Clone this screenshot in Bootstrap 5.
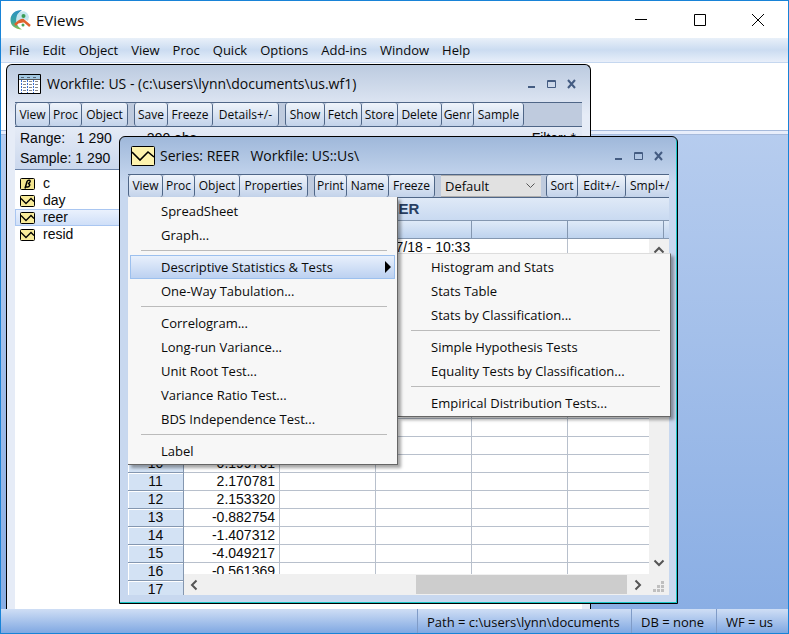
<!DOCTYPE html>
<html lang="en">
<head>
<meta charset="utf-8">
<meta name="viewport" content="width=device-width, initial-scale=1">
<title>EViews</title>
<link href="https://cdn.jsdelivr.net/npm/bootstrap@5.3.0/dist/css/bootstrap.min.css" rel="stylesheet">
<style>
:root{--line:#4f6687;--cell:#b8c0cc}
body{font-family:"Open Sans","Noto Sans",sans-serif;font-size:13px;line-height:18px;color:#0a0a0a}
button,select{font:inherit;color:inherit}
button{background:none;border:0;padding:0}
a{color:inherit;text-decoration:none}
.app{border:1px solid #1883d7;overflow:hidden}
.app-title{height:37px;padding-left:9px;font-size:15px}
.app-title .caption{gap:5px}
.win-controls{width:154px;padding-right:23px}
.win-controls button,.win-controls svg,.frame-controls svg{display:block}
.menubar{height:25px;gap:13px;padding-left:8px;background:linear-gradient(#e9f0f9,#cbdcf1 50%,#e8effa);border-bottom:1px solid #c5d7ef}
.desktop{background:linear-gradient(#bdd1f0,#8aaee4)}
.command{height:72px;background:#fff;border-bottom:1px solid #a6badb}
.command::after{content:"";display:block;height:4px;margin-top:67px;background:#e8eefb;border-top:1px solid #a6badb}
.frame{border:1px solid #000;border-radius:6px 6px 0 0;overflow:hidden;padding:0 8px}
.frame-work{left:5px;top:1px;bottom:0;width:585px;border-bottom:0;background:linear-gradient(#bccbe0,#e6ecf7 50px)}
.frame-series{left:118px;top:73px;width:559px;background:linear-gradient(#9fb8da,#c8d8ef 46px);box-shadow:inset -1px -1px #19c5c5;padding-bottom:8px}
.frame-bar{height:37px;font-size:14px}
.frame-bar .caption{gap:5px;padding-left:3px}
.frame-work .caption{gap:6px}
.frame-controls{gap:11px;padding-right:3px}
.tools{display:grid;height:25px;border:solid var(--line);border-width:1px 0;background:#bfcbde}
.tools-work{grid-template-columns:35px 32px 46px 6px 34px 45px 66px 6px 40px 37px 36px 44px 32px 50px}
.tools-series{height:24px;grid-template-columns:35px 32px 45px 68px 6px 33px 42px 46px 6px 100px 5px 32px 48px 49px;overflow:hidden}
.tools button{font-size:12px;white-space:nowrap;border:solid var(--line);border-width:0 1px 0 0;border-radius:3px;background:linear-gradient(#eff4fb,#c3d3ea)}
.tools button.lead-in{border-left-width:1px}
.tools select{border:1px solid #adadad;border-width:1px 0;padding:0 4px;appearance:none;background:#e1e1e1 url("data:image/svg+xml,%3Csvg xmlns='http://www.w3.org/2000/svg' width='9' height='6'%3E%3Cpath d='M.5 .5l4 4 4-4' fill='none' stroke='%23555'/%3E%3C/svg%3E") no-repeat right 6px center;border-radius:0}
.arial{font-family:"Liberation Sans",Arial,sans-serif;font-size:14px}
.info{height:43px;padding:1px 6px 0 5px;line-height:20px;border-bottom:1px solid #6b83a8;background:linear-gradient(#e5ebf6,#cbd8ee)}
.objects{padding-top:5px}
.objects a{height:17px;line-height:17px;gap:8px;padding-left:4px;border:1px solid transparent}
.objects a.on{background:linear-gradient(#eaf1fd,#cfdff8);border-color:#a9c6f1}
.sheet{height:397px}
.sheet-title{height:22px;font-size:15px;line-height:22px;color:#283f62;background:linear-gradient(#dfe9f7,#c9daf1)}
.grid{table-layout:fixed;width:556px;border-collapse:separate;border-spacing:0;line-height:17px}
.grid th,.grid td{height:18px;padding:0 4px 0 0;border:solid var(--cell);border-width:0 1px 1px 0;background:#fff;text-align:right;white-space:nowrap}
.grid thead th{border-color:#8497b0;border-top:1px solid #8497b0;background:linear-gradient(#dfeaf8,#bed3ee);height:19px}
.grid tbody th{font-weight:400;text-align:center;padding:0;background:#d3e2f4;border-color:#8497b0;box-shadow:inset 1px 1px #fff}
.w-row{width:56px}.w-col{width:96px}.w-end{width:20px}
.vbar{right:0;top:41px;bottom:0;width:20px;background:#f0f0f0;padding:7px 0 2px}
.hbar{left:56px;right:20px;bottom:0;height:21px;background:#f0f0f0;padding:1px 7px 1px 6px}
.thumb{width:211px;background:#cdcdcd;margin-right:7px}
.popup{background:#f7f7f7;border:solid #666;border-width:0 1px 1px 0;padding:2px 2px 1px;box-shadow:3px 3px 3px rgba(0,0,0,.35);z-index:3}
.popup-view{left:8px;top:60px;width:270px}
.popup-tests{left:278px;top:116px;width:273px;border-top:1px solid #ddd;padding-top:1px;z-index:2}
.popup button{display:flex;align-items:center;justify-content:space-between;width:100%;height:24px;padding:0 3px 0 31px}
.popup button.on{background:linear-gradient(#e8f0fc,#bcd1f1);background-clip:padding-box;border:1px solid #9cc0ee;padding:0 2px 0 30px}
.popup hr{margin:3px 8px 4px 11px;border-top:1px solid #bbb;opacity:1}
.status{height:24px;background:linear-gradient(#cfdef5,#80a8e2)}
.status span{border-left:1px solid #7f9bc7;padding:4px 9px 0;height:24px}
.s-path{width:214px}.s-db{width:85px}.s-wf{width:72px}
</style>
</head>
<body>
<svg class="d-none">
  <symbol id="series" viewBox="0 0 24 20"><rect x=".5" y=".5" width="23" height="19" rx="1" fill="#fdf3ae" stroke="#000"/><path d="M1 6l8 8 8-8 6 5" fill="none" stroke="#000" stroke-width="1.6"/></symbol>
  <symbol id="series-sm" viewBox="0 0 15 12"><rect x=".5" y=".5" width="14" height="11" rx="1" fill="#f8eb9a" stroke="#000"/><path d="M1 3.500l5 5 5-5 3 3" fill="none" stroke="#000" stroke-width="1.300"/></symbol>
  <symbol id="ctl" viewBox="0 0 52 12"><path d="M1 9h7" stroke="#445c82" stroke-width="2"/><path d="M20.500 2.500h8v7h-8zM20 3.500h9" fill="none" stroke="#445c82"/><path d="M41 2l7 8M48 2l-7 8" stroke="#445c82" stroke-width="2"/></symbol>
</svg>
<div class="app d-flex flex-column vh-100">
  <header class="app-title d-flex align-items-center justify-content-between bg-white">
    <div class="caption d-flex align-items-center">
      <svg width="21" height="20" viewBox="0 0 21 20"><defs><linearGradient id="g" x2="0" y2="1"><stop stop-color="#2b8fc4"/><stop offset=".6" stop-color="#3aa6a0"/><stop offset="1" stop-color="#8cc04a"/></linearGradient></defs><path d="M12 0C5 0 .500 4 .500 10S5 19 12 19.500C8 17 6 14 6.500 10S8 3 12 0z" fill="url(#g)"/><path d="M10 2c5-2 8 1 9 5l-1 4-4-2-4 2-3 2C6 9 6 4 10 2z" fill="#c3e5ee"/><circle cx="13.500" cy="6" r="2" fill="#3b9d57"/><path d="M5 15c3-3 5-5 8-5l7 6M9 12l5-1" stroke="#e0622c" stroke-width="2.500" fill="none"/><circle cx="13" cy="15" r="1.500" fill="#4ba35a"/></svg>
      <span>EViews</span>
    </div>
    <div class="win-controls d-flex align-items-center justify-content-between">
      <button aria-label="Minimize"><svg width="14" height="14"><path d="M1 6.500h12" stroke="#000"/></svg></button>
      <button aria-label="Maximize"><svg width="14" height="14"><path d="M1.500 1.500h11v11h-11z" fill="none" stroke="#000"/></svg></button>
      <button aria-label="Close"><svg width="14" height="14"><path d="M1 1l12 12M13 1L1 13" stroke="#000"/></svg></button>
    </div>
  </header>
  <nav class="menubar d-flex align-items-center">
    <a href="#">File</a><a href="#">Edit</a><a href="#">Object</a><a href="#">View</a><a href="#">Proc</a><a href="#">Quick</a><a href="#">Options</a><a href="#">Add-ins</a><a href="#">Window</a><a href="#">Help</a>
  </nav>
  <main class="desktop flex-grow-1 position-relative overflow-hidden">
    <div class="command overflow-hidden"></div>

    <section class="frame frame-work position-absolute d-flex flex-column">
      <div class="frame-bar d-flex align-items-center justify-content-between flex-shrink-0">
        <div class="caption d-flex align-items-center">
          <svg width="23" height="20" viewBox="0 0 23 20"><path d="M.500 .500h22v19H.500z" fill="#fff" stroke="#000"/><path d="M1 1h21v4H1z" fill="#a3c8e2"/><path d="M1 5.500h21" stroke="#555"/><path d="M3.500 6v13M9.500 6v13M15.500 6v13" stroke="#3b6fd0" stroke-dasharray="2 1"/><path d="M5 7.500h16M5 10.500h16M5 13.500h16M5 16.500h16" stroke="#888" stroke-dasharray="3 3"/><path d="M3 3.500h17" stroke="#567" stroke-dasharray="3 3"/></svg>
          <span>Workfile: US - (c:\users\lynn\documents\us.wf1)</span>
        </div>
        <div class="frame-controls"><svg width="52" height="12" role="img" aria-label="Window controls"><use href="#ctl"/></svg></div>
      </div>
      <div class="tools tools-work flex-shrink-0">
        <button class="lead-in">View</button><button>Proc</button><button>Object</button><i></i>
        <button class="lead-in">Save</button><button>Freeze</button><button>Details+/-</button><i></i>
        <button class="lead-in">Show</button><button>Fetch</button><button>Store</button><button>Delete</button><button>Genr</button><button>Sample</button>
      </div>
      <div class="info arial flex-shrink-0">
        <div class="d-flex"><span>Range:&nbsp;&nbsp; 1 290&nbsp;&nbsp;&nbsp;&nbsp;&nbsp;&nbsp;&nbsp;&nbsp; 290 obs</span><span class="ms-auto">Filter: *</span></div>
        <div>Sample: 1 290</div>
      </div>
      <div class="objects arial bg-white flex-grow-1">
        <a href="#" class="d-flex align-items-center"><svg width="15" height="12" viewBox="0 0 15 12"><rect x=".5" y=".5" width="14" height="11" rx="1" fill="#f3e58f" stroke="#000"/><path d="M5 10.500L7 3.500C8 1.500 11 2 10 4 9.500 5 8 5.500 8 5.500 11 6 9.500 9 7.500 9H6" fill="none" stroke="#000" stroke-width="1.500"/></svg>c</a>
        <a href="#" class="d-flex align-items-center"><svg width="15" height="12"><use href="#series-sm"/></svg>day</a>
        <a href="#" class="d-flex align-items-center on"><svg width="15" height="12"><use href="#series-sm"/></svg>reer</a>
        <a href="#" class="d-flex align-items-center"><svg width="15" height="12"><use href="#series-sm"/></svg>resid</a>
      </div>
    </section>

    <section class="frame frame-series position-absolute">
      <div class="frame-bar d-flex align-items-center justify-content-between">
        <div class="caption d-flex align-items-center">
          <svg width="24" height="20"><use href="#series"/></svg>
          <span>Series: REER&nbsp;&nbsp; Workfile: US::Us\</span>
        </div>
        <div class="frame-controls"><svg width="52" height="12" role="img" aria-label="Window controls"><use href="#ctl"/></svg></div>
      </div>
      <div class="tools tools-series">
        <button class="lead-in">View</button><button>Proc</button><button>Object</button><button>Properties</button><i></i>
        <button class="lead-in">Print</button><button>Name</button><button>Freeze</button><i></i>
        <select aria-label="Display mode"><option>Default</option></select><i></i>
        <button class="lead-in">Sort</button><button>Edit+/-</button><button class="text-start ps-1">Smpl+/-</button>
      </div>
      <div class="sheet arial position-relative overflow-hidden bg-white">
        <div class="sheet-title text-center fw-bold">REER</div>
        <table class="grid">
          <colgroup><col class="w-row"><col class="w-col"><col class="w-col"><col class="w-col"><col class="w-col"><col class="w-col"><col class="w-end"></colgroup>
          <thead><tr><th></th><th></th><th></th><th></th><th></th><th></th><th></th></tr></thead>
          <tbody>
            <tr><th></th><td></td><td></td><td colspan="2" class="text-start">5/17/18 - 10:33</td><td></td></tr>
            <tr><th></th><td></td><td></td><td></td><td></td><td></td></tr>
            <tr><th></th><td></td><td></td><td></td><td></td><td></td></tr>
            <tr><th></th><td></td><td></td><td></td><td></td><td></td></tr>
            <tr><th></th><td></td><td></td><td></td><td></td><td></td></tr>
            <tr><th></th><td></td><td></td><td></td><td></td><td></td></tr>
            <tr><th></th><td></td><td></td><td></td><td></td><td></td></tr>
            <tr><th></th><td></td><td></td><td></td><td></td><td></td></tr>
            <tr><th></th><td></td><td></td><td></td><td></td><td></td></tr>
            <tr><th></th><td></td><td></td><td></td><td></td><td></td></tr>
            <tr><th></th><td></td><td></td><td></td><td></td><td></td></tr>
            <tr><th></th><td></td><td></td><td></td><td></td><td></td></tr>
            <tr><th>10</th><td>0.199701</td><td></td><td></td><td></td><td></td></tr>
            <tr><th>11</th><td>2.170781</td><td></td><td></td><td></td><td></td></tr>
            <tr><th>12</th><td>2.153320</td><td></td><td></td><td></td><td></td></tr>
            <tr><th>13</th><td>-0.882754</td><td></td><td></td><td></td><td></td></tr>
            <tr><th>14</th><td>-1.407312</td><td></td><td></td><td></td><td></td></tr>
            <tr><th>15</th><td>-4.049217</td><td></td><td></td><td></td><td></td></tr>
            <tr><th>16</th><td>-0.561369</td><td></td><td></td><td></td><td></td></tr>
            <tr><th>17</th><td></td><td></td><td></td><td></td><td></td></tr>
          </tbody>
        </table>
        <div class="vbar position-absolute d-flex flex-column align-items-center">
          <svg width="12" height="8"><path d="M1.500 6.500l4.500-4.500 4.500 4.500" fill="none" stroke="#555" stroke-width="2"/></svg>
          <svg class="mt-auto" width="12" height="24"><path d="M1.500 3.500l4.500 4.500 4.500-4.500" fill="none" stroke="#555" stroke-width="2"/></svg>
          <svg width="12" height="12" fill="#bfbfbf"><path d="M8 0h3v3H8zM4 4h3v3H4zM8 4h3v3H8zM0 8h3v3H0zM4 8h3v3H4zM8 8h3v3H8z"/></svg>
        </div>
        <div class="hbar position-absolute d-flex align-items-center">
          <svg width="8" height="12"><path d="M6.500 1.500L2 6l4.500 4.500" fill="none" stroke="#555" stroke-width="2"/></svg>
          <div class="thumb ms-auto h-100"></div>
          <svg width="8" height="12"><path d="M1.500 1.500L6 6l-4.500 4.500" fill="none" stroke="#555" stroke-width="2"/></svg>
        </div>
      </div>
      <div class="popup popup-view position-absolute">
        <button>SpreadSheet</button><button>Graph...</button>
        <hr>
        <button class="on">Descriptive Statistics &amp; Tests<svg width="8" height="12"><path d="M1 0l6 6-6 6z"/></svg></button><button>One-Way Tabulation...</button>
        <hr>
        <button>Correlogram...</button><button>Long-run Variance...</button><button>Unit Root Test...</button><button>Variance Ratio Test...</button><button>BDS Independence Test...</button>
        <hr>
        <button>Label</button>
      </div>
      <div class="popup popup-tests position-absolute">
        <button>Histogram and Stats</button><button>Stats Table</button><button>Stats by Classification...</button>
        <hr>
        <button>Simple Hypothesis Tests</button><button>Equality Tests by Classification...</button>
        <hr>
        <button>Empirical Distribution Tests...</button>
      </div>
    </section>
  </main>
  <footer class="status d-flex justify-content-end flex-shrink-0">
    <span class="s-path">Path = c:\users\lynn\documents</span><span class="s-db">DB = none</span><span class="s-wf">WF = us</span>
  </footer>
</div>
<script src="https://cdn.jsdelivr.net/npm/bootstrap@5.3.0/dist/js/bootstrap.bundle.min.js"></script>
</body>
</html>
